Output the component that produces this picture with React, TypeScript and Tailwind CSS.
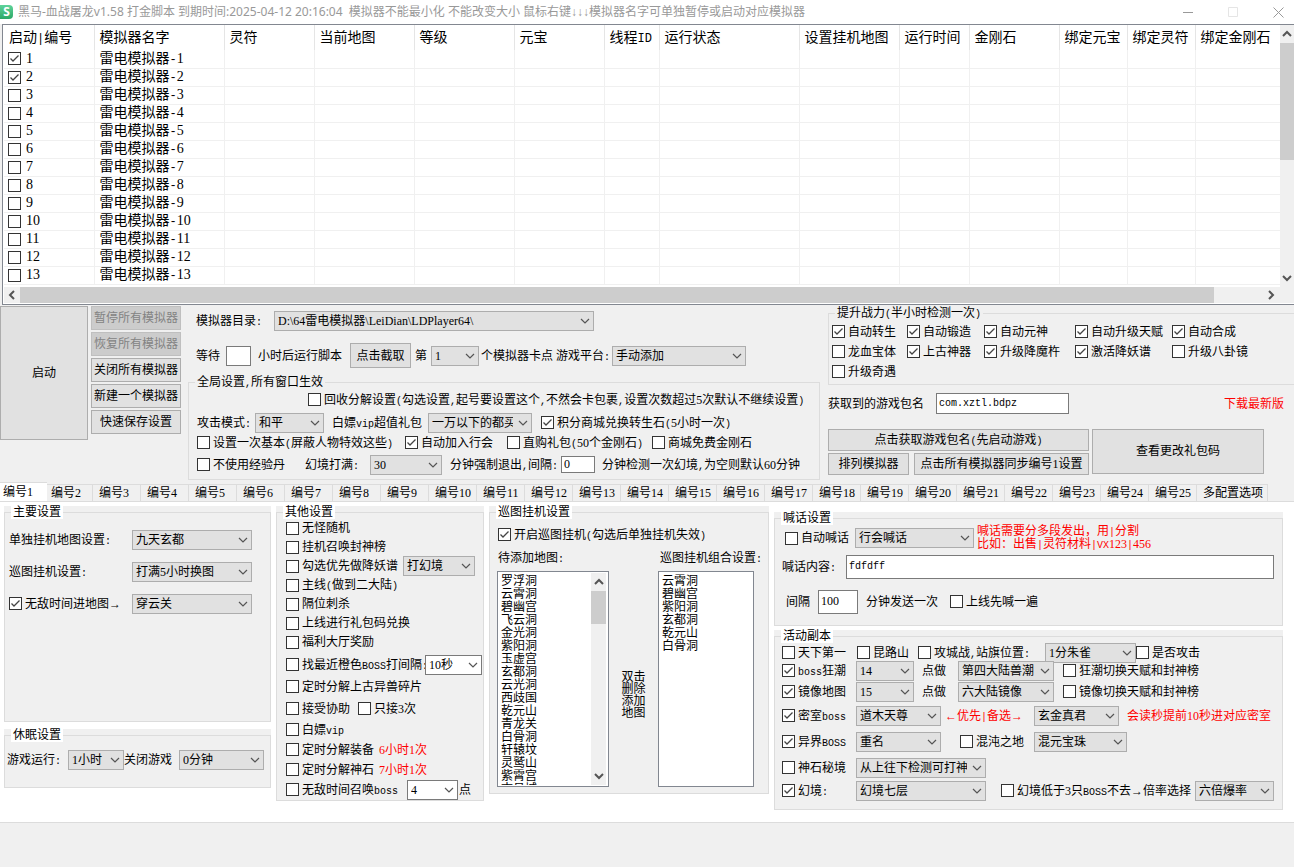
import type { ReactNode } from 'react';
import clsx from 'clsx';

const columns = [
  { title: '启动|编号', width: 'w-[90px]' },
  { title: '模拟器名字', width: 'w-[130px]' },
  { title: '灵符', width: 'w-[90px]' },
  { title: '当前地图', width: 'w-[100px]' },
  { title: '等级', width: 'w-[100px]' },
  { title: '元宝', width: 'w-[90px]' },
  { title: '线程ID', width: 'w-[55px]' },
  { title: '运行状态', width: 'w-[140px]' },
  { title: '设置挂机地图', width: 'w-[100px]' },
  { title: '运行时间', width: 'w-[70px]' },
  { title: '金刚石', width: 'w-[90px]' },
  { title: '绑定元宝', width: 'w-[68px]' },
  { title: '绑定灵符', width: 'w-[68px]' },
  { title: '绑定金刚石', width: '' },
];

const emulators = Array.from({ length: 13 }, (_, i) => i + 1);
const tabs = Array.from({ length: 25 }, (_, i) => `编号${i + 1}`);

const waitingMaps = [
  '罗浮洞', '云霄洞', '碧幽宫', '飞云洞', '金光洞', '紫阳洞', '玉虚宫', '玄都洞', '云光洞',
  '西歧国', '乾元山', '青龙关', '白骨洞', '轩辕坟', '灵鹫山', '紫霄宫', '古吕城',
];
const chosenMaps = ['云霄洞', '碧幽宫', '紫阳洞', '玄都洞', '乾元山', '白骨洞'];

const powerUps = [
  ['自动转生', true], ['自动锻造', true], ['自动元神', true], ['自动升级天赋', true], ['自动合成', true],
  ['龙血宝体', false], ['上古神器', true], ['升级降魔杵', true], ['激活降妖谱', true], ['升级八卦镜', false],
  ['升级奇遇', false],
] as const;

// half-width characters take exactly half of a full-width one
const Txt = ({ children, big }: { children: string; big?: boolean }) => (
  <span className="whitespace-nowrap">
    {children.split(/([A-Za-z(),:|-]+)/).map((part, i) =>
      i % 2 ? (
        <span
          key={i}
          className={clsx("leading-none font-['Liberation_Mono',monospace]", big ? 'text-[12px]' : 'text-[10px]')}
        >
          {part}
        </span>
      ) : (
        part
      )
    )}
  </span>
);

const Check = ({ text, on, big }: { text: string; on?: boolean; big?: boolean }) => (
  <label className={clsx('flex items-center', big ? 'gap-[5px]' : 'gap-[3px]')}>
    <span className="grid shrink-0">
      <input
        type="checkbox"
        defaultChecked={on}
        className="peer col-start-1 row-start-1 h-[13px] w-[13px] appearance-none border border-[#333] bg-white"
      />
      <svg
        viewBox="0 0 13 13"
        className="pointer-events-none invisible col-start-1 row-start-1 h-[13px] w-[13px] peer-checked:visible"
      >
        <path d="M2.5 6.5 5 9 10.5 3.5" fill="none" stroke="#444" strokeWidth="1.3" />
      </svg>
    </span>
    <Txt big={big}>{text}</Txt>
  </label>
);

const Chevron = ({ className, bold }: { className?: string; bold?: boolean }) => (
  <svg viewBox="0 0 10 10" className={clsx('h-[10px] w-[10px]', className)}>
    <path d="M1 3 5 7 9 3" fill="none" stroke="#555" strokeWidth={bold ? 2 : 1.2} />
  </svg>
);

type SelProps = { id: string; value: string; width: string; white?: boolean; label?: string };

const Sel = ({ id, value, width, white, label }: SelProps) => (
  <span className={clsx('grid', width)}>
    <select
      id={id}
      aria-label={label}
      defaultValue={value}
      className={clsx(
        'col-start-1 row-start-1 h-5 w-full appearance-none border pr-[18px] pl-[3px]',
        white ? 'border-[#7a7a7a] bg-white' : 'border-[#adadad] bg-[#e1e1e1]'
      )}
    >
      <option>{value}</option>
    </select>
    <Chevron className="pointer-events-none col-start-1 row-start-1 mr-1 self-center justify-self-end" />
  </span>
);

const Lbl = ({ to, children }: { to: string; children: string }) => (
  <label htmlFor={to}>
    <Txt>{children}</Txt>
  </label>
);

const Btn = ({ children, className, disabled }: { children: string; className: string; disabled?: boolean }) => (
  <button
    type="button"
    disabled={disabled}
    className={clsx(
      'border',
      disabled ? 'border-[#bfbfbf] bg-[#ccc] text-[#838383]' : 'border-[#adadad] bg-[#e1e1e1]',
      className
    )}
  >
    <Txt>{children}</Txt>
  </button>
);

const Group = ({ title, page, className, children }: {
  title: string;
  page?: boolean;
  className?: string;
  children: ReactNode;
}) => (
  <div className="bg-[#f0f0f0]">
    <fieldset className={clsx('min-w-0 border border-[#dcdcdc]', className)}>
      <legend className={clsx('ml-1.5 px-0.5 leading-[13px]', page && 'bg-white')}>
        <Txt>{title}</Txt>
      </legend>
      {children}
    </fieldset>
  </div>
);

const TitleBar = () => (
  <header className="flex h-6 items-center gap-[5px] bg-white pr-[10px] font-['Noto_Sans','Liberation_Sans','Noto_Sans_CJK_SC',sans-serif] text-[#999]">
    <span className="h-[14px] w-[13px] rounded-r bg-linear-to-b from-[#5fd39a] to-[#2aa866] text-center font-bold text-white">
      S
    </span>
    <h1 className="whitespace-pre">
      黑马-血战屠龙v1.58 打金脚本 到期时间:2025-04-12 20:16:04{'  '}模拟器不能最小化 不能改变大小 鼠标右键↓↓↓模拟器名字可单独暂停或启动对应模拟器
    </h1>
    <div className="ml-auto flex gap-[34px]">
      <button type="button" aria-label="最小化">
        <svg viewBox="0 0 11 11" className="h-[11px] w-[11px]">
          <path d="M0 5.5H10" stroke="#999" />
        </svg>
      </button>
      <button type="button" aria-label="最大化" disabled>
        <svg viewBox="0 0 11 11" className="h-[11px] w-[11px]">
          <path d="M.5.5H9.5V9.5H.5Z" fill="none" stroke="#e5e5e5" />
        </svg>
      </button>
      <button type="button" aria-label="关闭">
        <svg viewBox="0 0 11 11" className="h-[11px] w-[11px]">
          <path d="M.5.5 10.5 10.5M10.5.5.5 10.5" stroke="#999" />
        </svg>
      </button>
    </div>
  </header>
);

const EmulatorTable = () => (
  <section className="ml-0.5 border border-r-0 border-[#828790] bg-white pb-px pl-px">
    <div className="flex">
      <div className="min-w-0 flex-1 overflow-hidden pb-0.5">
        <table className="w-full table-fixed text-sm leading-[16px]">
          <thead>
            <tr className="h-[25px]">
              {columns.map((c) => (
                <th
                  key={c.title}
                  className={clsx('border-r border-[#e5e5e5] p-0 pl-[5px] text-left font-normal last:border-r-0', c.width)}
                >
                  <Txt big>{c.title}</Txt>
                </th>
              ))}
            </tr>
          </thead>
          <tbody>
            {emulators.map((n) => (
              <tr key={n} className="h-[18px]">
                <td className="border-r border-b border-[#f0f0f0] p-0 pl-1">
                  <Check big text={`${n}`} on={n < 3} />
                </td>
                <td className="border-r border-b border-[#f0f0f0] p-0 pl-[5px]">
                  <Txt big>{`雷电模拟器-${n}`}</Txt>
                </td>
                {columns.slice(2).map((c) => (
                  <td key={c.title} className="border-r border-b border-[#f0f0f0] p-0 last:border-r-0" />
                ))}
              </tr>
            ))}
          </tbody>
        </table>
      </div>
      <div className="flex w-[14px] flex-col items-center bg-[#f0f0f0]">
        <Chevron bold className="my-1 rotate-180" />
        <div className="h-[117px] w-full bg-[#cdcdcd]" />
        <Chevron bold className="mt-auto mb-1" />
      </div>
    </div>
    <div className="flex h-4 items-center bg-[#f0f0f0] pr-[18px]">
      <Chevron bold className="mx-[3px] shrink-0 rotate-90" />
      <div className="mr-[52px] h-full flex-1 bg-[#cdcdcd]" />
      <Chevron bold className="shrink-0 -rotate-90" />
    </div>
  </section>
);

const GlobalSettings = () => (
  <div className="w-[632px]">
    <div className="grid h-[30px] grid-cols-[78px_auto] items-center pl-2">
      <Lbl to="dir">模拟器目录:</Lbl>
      <Sel id="dir" value="D:\64雷电模拟器\LeiDian\LDPlayer64\" width="w-[320px]" />
    </div>
    <div className="grid h-10 grid-cols-[30px_32px_92px_65px_16px_50px_131px_auto] items-center pl-2">
      <Lbl to="wait">等待</Lbl>
      <input id="wait" className="h-5 w-[25px] border border-[#7a7a7a] bg-white px-0.5" />
      <Txt>小时后运行脚本</Txt>
      <Btn className="h-[25px] w-[61px]">点击截取</Btn>
      <Lbl to="nth">第</Lbl>
      <Sel id="nth" value="1" width="w-[48px]" />
      <Lbl to="platform">个模拟器卡点 游戏平台:</Lbl>
      <Sel id="platform" value="手动添加" width="w-[134px]" />
    </div>
    <Group title="全局设置,所有窗口生效">
      <div className="flex h-[22px] items-center pl-[119px]">
        <Check text="回收分解设置(勾选设置,起号要设置这个,不然会卡包裹,设置次数超过5次默认不继续设置)" />
      </div>
      <div className="grid h-6 grid-cols-[58px_77px_96px_113px_auto] items-center pl-2">
        <Lbl to="attack">攻击模式:</Lbl>
        <Sel id="attack" value="和平" width="w-[69px]" />
        <Lbl to="gift">白嫖vip超值礼包</Lbl>
        <Sel id="gift" value="一万以下的都买" width="w-[104px]" />
        <Check text="积分商城兑换转生石(5小时一次)" on />
      </div>
      <div className="grid h-4 grid-cols-[208px_102px_145px_auto] items-center pl-2">
        <Check text="设置一次基本(屏蔽人物特效这些)" />
        <Check text="自动加入行会" on />
        <Check text="直购礼包(50个金刚石)" />
        <Check text="商城免费金刚石" />
      </div>
      <div className="grid h-7 grid-cols-[108px_65px_80px_111px_41px_auto] items-center pl-2">
        <Check text="不使用经验丹" />
        <Lbl to="full">幻境打满:</Lbl>
        <Sel id="full" value="30" width="w-[72px]" />
        <Lbl to="gap">分钟强制退出,间隔:</Lbl>
        <input id="gap" defaultValue="0" className="h-[17px] w-[34px] border border-[#7a7a7a] bg-white px-0.5" />
        <Txt>分钟检测一次幻境,为空则默认60分钟</Txt>
      </div>
    </Group>
  </div>
);

const PowerPanel = () => (
  <div className="min-w-0 flex-1 pt-px">
    <Group title="提升战力(半小时检测一次)" className="border-r-0 pb-0.5">
      <div className="grid auto-rows-[20px] grid-cols-[75px_77px_91px_97px_auto] items-center pt-0.5 pl-[3px]">
        {powerUps.map(([text, on]) => (
          <Check key={text} text={text} on={on} />
        ))}
      </div>
    </Group>
    <div className="flex h-[38px] items-center pr-[10px]">
      <div className="grid grid-cols-[108px_133px] items-center">
        <Lbl to="pkg">获取到的游戏包名</Lbl>
        <input
          id="pkg"
          defaultValue="com.xztl.bdpz"
          className="h-[21px] border border-[#7a7a7a] bg-white px-0.5 font-['Liberation_Mono',monospace] text-[10px]"
        />
      </div>
      <a href="#download" className="ml-auto text-[#f00]">
        下载最新版
      </a>
    </div>
    <div className="mt-1.5 flex items-start gap-[3px]">
      <div className="flex w-[261px] flex-col gap-0.5">
        <Btn className="h-[22px]">点击获取游戏包名(先启动游戏)</Btn>
        <div className="flex justify-between">
          <Btn className="h-[22px] w-[81px]">排列模拟器</Btn>
          <Btn className="h-[22px] w-[175px]">点击所有模拟器同步编号1设置</Btn>
        </div>
      </div>
      <Btn className="h-[45px] w-[172px]">查看更改礼包码</Btn>
    </div>
  </div>
);

const TabBar = () => (
  <nav className="flex items-end border-b border-[#dcdcdc]">
    {tabs.map((tab, i) => (
      <button
        type="button"
        key={tab}
        className={clsx(
          'shrink-0 border-[#dcdcdc] text-left',
          i === 0 ? 'h-[19px] w-[47px] border-t bg-white pl-[3px]' : 'h-[17px] border-t border-r',
          i === 1 && 'w-[46px] pl-1',
          i > 1 && 'w-12 pl-1.5'
        )}
      >
        {tab}
      </button>
    ))}
    <button type="button" className="h-[17px] w-[71px] shrink-0 border-t border-r border-[#dcdcdc] pl-1.5 text-left">
      多配置选项
    </button>
  </nav>
);

const MainColumn = () => (
  <div className="flex flex-col gap-[7px]">
    <Group title="主要设置" page className="min-h-[216px]">
      <div className="grid auto-rows-[32px] grid-cols-[123px_120px] items-center pt-[5px] pl-1">
        <Lbl to="single">单独挂机地图设置:</Lbl>
        <Sel id="single" value="九天玄都" width="w-[120px]" />
        <Lbl to="patrol">巡图挂机设置:</Lbl>
        <Sel id="patrol" value="打满5小时换图" width="w-[120px]" />
        <Check text="无敌时间进地图→" on />
        <Sel id="enter" label="无敌时间进地图" value="穿云关" width="w-[120px]" />
      </div>
    </Group>
    <Group title="休眠设置" page className="min-h-[59px]">
      <div className="grid h-9 grid-cols-[61px_56px_55px_85px] items-center pl-0.5">
        <Lbl to="run">游戏运行:</Lbl>
        <Sel id="run" value="1小时" width="w-[56px]" />
        <Lbl to="close">关闭游戏</Lbl>
        <Sel id="close" value="0分钟" width="w-[85px]" />
      </div>
    </Group>
  </div>
);

const OtherSettings = () => (
  <Group title="其他设置" page>
    <div className="pl-[9px]">
      <div className="grid auto-rows-[19px] items-center">
        <Check text="无怪随机" />
        <Check text="挂机召唤封神榜" />
        <div className="grid grid-cols-[117px_auto] items-center">
          <Check text="勾选优先做降妖谱" />
          <Sel id="demon" label="降妖谱" value="打幻境" width="w-[72px]" />
        </div>
        <Check text="主线(做到二大陆)" />
        <Check text="隔位刺杀" />
        <Check text="上线进行礼包码兑换" />
        <Check text="福利大厅奖励" />
      </div>
      <div className="grid auto-rows-[22px] items-center pt-0.5">
        <div className="grid grid-cols-[139px_auto] items-center">
          <Check text="找最近橙色BOSS打间隔:" />
          <Sel id="orange" label="打间隔" value="10秒" width="w-[57px]" white />
        </div>
        <Check text="定时分解上古异兽碎片" />
        <div className="grid grid-cols-[72px_auto] items-center">
          <Check text="接受协助" />
          <Check text="只接3次" />
        </div>
      </div>
      <div className="grid auto-rows-[20px] items-center">
        <Check text="白嫖vip" />
        <div className="grid grid-cols-[93px_auto] items-center">
          <Check text="定时分解装备" />
          <span className="text-[#f00]">6小时1次</span>
        </div>
        <div className="grid grid-cols-[93px_auto] items-center">
          <Check text="定时分解神石" />
          <span className="text-[#f00]">7小时1次</span>
        </div>
        <div className="grid grid-cols-[121px_52px_auto] items-center">
          <Check text="无敌时间召唤boss" />
          <Sel id="summon" label="召唤boss" value="4" width="w-[51px]" white />
          <span>点</span>
        </div>
      </div>
    </div>
  </Group>
);

const MapList = ({ maps, label }: { maps: string[]; label: string }) => (
  <ul role="listbox" aria-label={label} className="flex-1 overflow-hidden pt-0.5 leading-[13px]">
    {maps.map((m) => (
      <li key={m} role="option" aria-selected={false}>
        {m}
      </li>
    ))}
  </ul>
);

const PatrolSettings = () => (
  <Group title="巡图挂机设置" page className="pb-1.5">
    <div className="flex h-8 items-center pl-2">
      <Check text="开启巡图挂机(勾选后单独挂机失效)" on />
    </div>
    <div className="grid h-4 grid-cols-[162px_auto] items-start pl-2">
      <Txt>待添加地图:</Txt>
      <Txt>巡图挂机组合设置:</Txt>
    </div>
    <div className="grid grid-cols-[112px_49px_96px] pt-1 pl-[7px]">
      <div className="flex h-[216px] border border-[#828790] bg-white py-px pr-0.5 pl-[3px]">
        <MapList maps={waitingMaps} label="待添加地图" />
        <div className="flex w-[15px] flex-col items-center bg-[#f0f0f0]">
          <Chevron bold className="my-1 rotate-180" />
          <div className="h-[33px] w-full bg-[#cdcdcd]" />
          <Chevron bold className="mt-auto mb-1" />
        </div>
      </div>
      <p className="w-6 self-center justify-self-center pt-8 leading-[12px]">双击删除添加地图</p>
      <div className="flex h-[216px] border border-[#828790] bg-white py-px pl-[3px]">
        <MapList maps={chosenMaps} label="巡图挂机组合" />
      </div>
    </div>
  </Group>
);

const ShoutSettings = () => (
  <Group title="喊话设置" page className="pb-[3px]">
    <div className="grid h-[27px] grid-cols-[70px_122px_auto] items-center pl-[10px]">
      <Check text="自动喊话" />
      <Sel id="channel" label="喊话频道" value="行会喊话" width="w-[119px]" />
      <p className="flex flex-col leading-[12px] text-[#f00]">
        <Txt>喊话需要分多段发出，用|分割</Txt>
        <Txt>比如：出售|灵符材料|VX123|456</Txt>
      </p>
    </div>
    <div className="grid h-[30px] grid-cols-[64px_1fr] items-center pr-2 pl-[7px]">
      <Lbl to="content">喊话内容:</Lbl>
      <input
        id="content"
        defaultValue="fdfdff"
        className="h-6 border border-[#7a7a7a] bg-white px-0.5 font-['Liberation_Mono',monospace] text-[10px]"
      />
    </div>
    <div className="grid h-10 grid-cols-[32px_48px_84px_auto] items-center pl-[11px]">
      <Lbl to="every">间隔</Lbl>
      <input id="every" defaultValue="100" className="h-6 w-10 border border-[#7a7a7a] bg-white px-0.5" />
      <Txt>分钟发送一次</Txt>
      <Check text="上线先喊一遍" />
    </div>
  </Group>
);

const ActivitySettings = () => (
  <Group title="活动副本" page className="pb-2">
    <div className="pl-[7px]">
      <div className="grid h-[18px] grid-cols-[75px_61px_127px_91px_auto] items-center">
        <Check text="天下第一" />
        <Check text="昆路山" />
        <Check text="攻城战,站旗位置:" />
        <Sel id="flag" label="站旗位置" value="1分朱雀" width="w-[91px]" />
        <Check text="是否攻击" />
      </div>
      <div className="grid h-5 grid-cols-[74px_66px_36px_105px_auto] items-center">
        <Check text="boss狂潮" on />
        <Sel id="tide" label="boss狂潮" value="14" width="w-[58px]" />
        <Lbl to="tideMap">点做</Lbl>
        <Sel id="tideMap" value="第四大陆兽潮" width="w-[96px]" />
        <Check text="狂潮切换天赋和封神榜" />
      </div>
      <div className="grid h-[22px] grid-cols-[74px_66px_36px_105px_auto] items-center">
        <Check text="镜像地图" on />
        <Sel id="mirror" label="镜像地图" value="15" width="w-[58px]" />
        <Lbl to="mirrorMap">点做</Lbl>
        <Sel id="mirrorMap" value="六大陆镜像" width="w-[96px]" />
        <Check text="镜像切换天赋和封神榜" />
      </div>
      <div className="grid h-[26px] grid-cols-[74px_89px_89px_93px_auto] items-center">
        <Check text="密室boss" on />
        <Sel id="room" label="密室boss优先" value="道木天尊" width="w-[85px]" />
        <span className="text-[#f00]">
          <Txt>←优先|备选→</Txt>
        </span>
        <Sel id="spare" label="密室boss备选" value="玄金真君" width="w-[85px]" />
        <span className="whitespace-nowrap text-[#f00]">会读秒提前10秒进对应密室</span>
      </div>
      <div className="grid h-[26px] grid-cols-[74px_104px_74px_auto] items-center">
        <Check text="异界BOSS" on />
        <Sel id="realm" label="异界BOSS" value="重名" width="w-[85px]" />
        <Check text="混沌之地" />
        <Sel id="chaos" label="混沌之地" value="混元宝珠" width="w-[93px]" />
      </div>
      <div className="grid h-[26px] grid-cols-[74px_auto] items-center">
        <Check text="神石秘境" />
        <Sel id="secret" label="神石秘境" value="从上往下检测可打神" width="w-[130px]" />
      </div>
      <div className="grid h-5 grid-cols-[74px_145px_194px_auto] items-center">
        <Check text="幻境:" on />
        <Sel id="dream" label="幻境" value="幻境七层" width="w-[130px]" />
        <Check text="幻境低于3只BOSS不去→倍率选择" />
        <Sel id="rate" label="倍率选择" value="六倍爆率" width="w-[79px]" />
      </div>
    </div>
  </Group>
);

export default function App() {
  return (
    <div className="min-h-screen overflow-hidden bg-[#f0f0f0] font-['Liberation_Serif','Noto_Sans_CJK_SC',serif] text-xs leading-[14px] text-black">
      <TitleBar />
      <EmulatorTable />
      <section className="flex items-start pt-px pb-0.5">
        <Btn className="h-[134px] w-[88px]">启动</Btn>
        <div className="mr-[7px] ml-[3px] flex flex-col gap-0.5">
          <Btn className="h-6 w-[90px]" disabled>暂停所有模拟器</Btn>
          <Btn className="h-6 w-[90px]" disabled>恢复所有模拟器</Btn>
          <Btn className="h-6 w-[90px]">关闭所有模拟器</Btn>
          <Btn className="h-6 w-[90px]">新建一个模拟器</Btn>
          <Btn className="h-6 w-[90px]">快速保存设置</Btn>
        </div>
        <GlobalSettings />
        <div className="w-2" />
        <PowerPanel />
      </section>
      <TabBar />
      <main className="grid grid-cols-[267px_208px_280px_1fr] items-start gap-[5px] border-b border-[#dcdcdc] bg-white pt-1 pr-[11px] pb-3 pl-1">
        <MainColumn />
        <OtherSettings />
        <PatrolSettings />
        <div className="flex flex-col gap-1 pt-1.5">
          <ShoutSettings />
          <ActivitySettings />
        </div>
      </main>
    </div>
  );
}
